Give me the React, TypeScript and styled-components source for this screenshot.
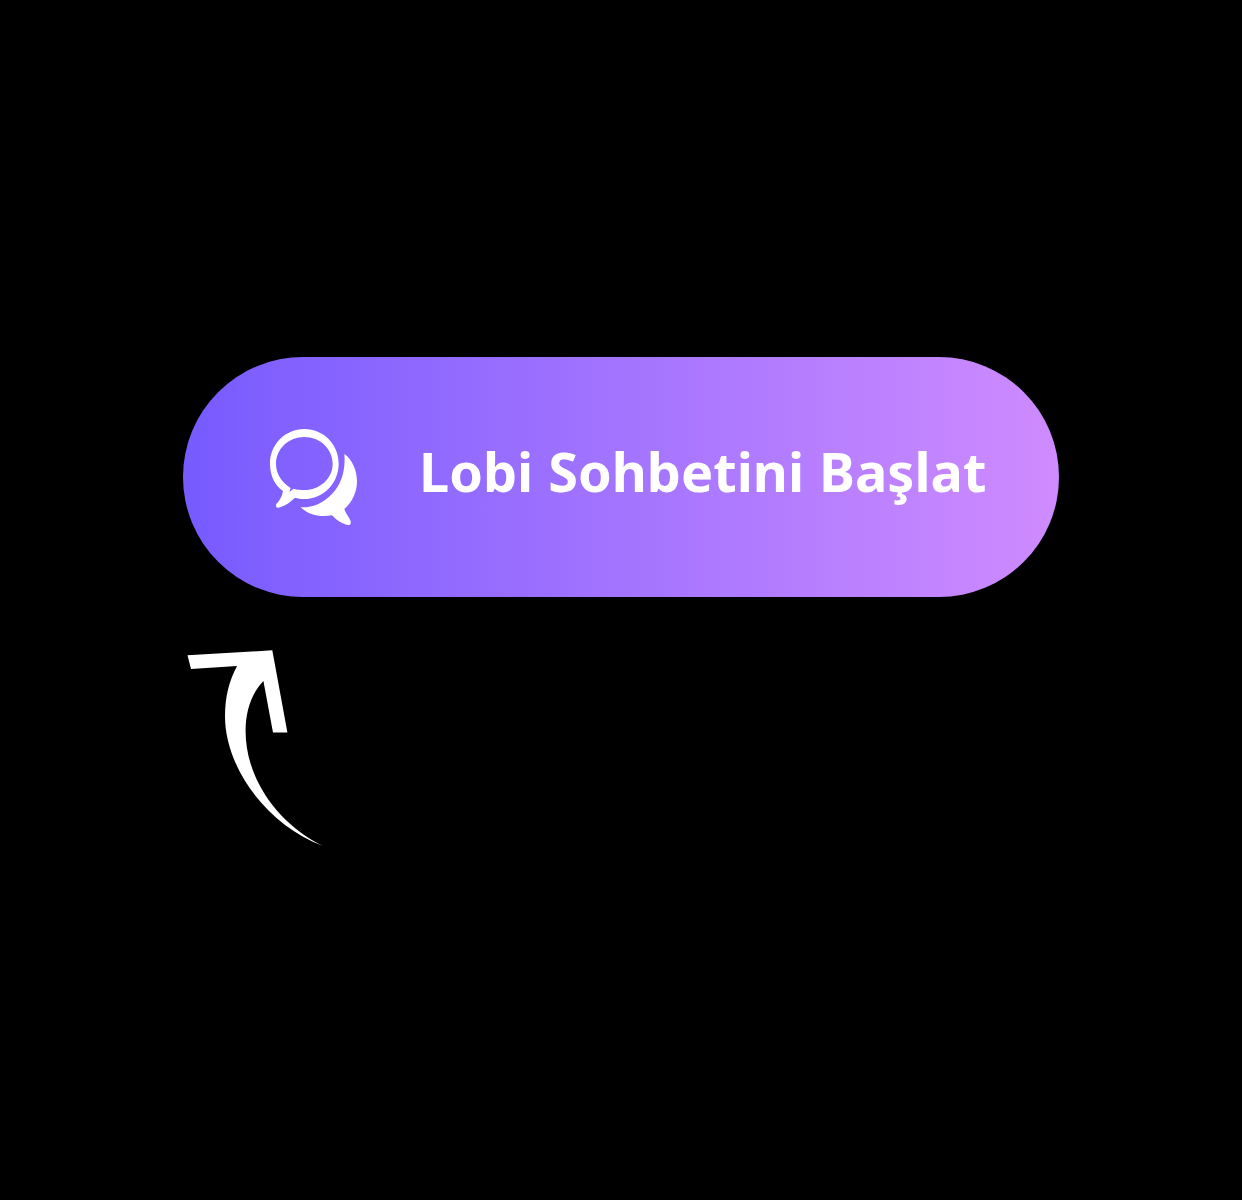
import React from "react";
import styled, { createGlobalStyle } from "styled-components";

const GlobalStyle = createGlobalStyle`
  body {
    margin: 0;
    background: #000;
  }
`;

const Page = styled.main`
  box-sizing: border-box;
  width: 1242px;
  height: 1200px;
  padding: 357px 183px 0;
  display: flex;
  flex-direction: column;
  align-items: flex-start;
  overflow: hidden;
  background: #000;
`;

const ChatButton = styled.button`
  box-sizing: border-box;
  width: 876px;
  height: 240px;
  padding: 0 0 0 77px;
  border: 0;
  border-radius: 120px;
  display: flex;
  align-items: center;
  gap: 49px;
  color: #fff;
  background: linear-gradient(90deg, #775bff 0%, #a374ff 50%, #cf8bff 100%);
  cursor: pointer;
`;

const ChatIcon = styled.svg`
  flex: none;
  width: 110px;
  height: 115px;
  fill: #fff;
`;

const Label = styled.span`
  padding-bottom: 12px;
  font-family: "Noto Sans", "Open Sans", sans-serif;
  font-size: 54px;
  font-weight: 700;
  line-height: 74px;
  word-spacing: 1px;
  white-space: nowrap;
`;

const Arrow = styled.svg`
  flex: none;
  width: 150px;
  height: 210px;
  margin-top: 43px;
  fill: #fff;
`;

export default function App() {
  return (
    <>
      <GlobalStyle />
      <Page>
        <ChatButton type="button">
          <ChatIcon viewBox="0 0 330 345" aria-hidden="true">
            <path
              fillRule="evenodd"
              d="M133 27C190 27 236 73 236 131C236 190 190 237 133 237C123 237 113 235 105 233C92 246 76 257 56 263C49 264 46 259 49 252C59 241 67 229 69 213C44 196 30 166 30 131C30 73 76 27 133 27ZM133 51C86 51 48 87 48 131C48 161 65 187 92 204L88 216L101 206C111 209 121 210 133 210C180 210 218 175 218 131C218 87 180 51 133 51Z"
            />
            <path d="M253 102C277 119 291 151 291 184C291 216 277 246 253 267C256 280 267 290 272 303C273 311 272 315 264 315C245 312 228 299 216 286C179 293 145 284 122 262C160 263 190 249 216 222C246 192 257 145 253 102Z" />
          </ChatIcon>
          <Label>Lobi Sohbetini Başlat</Label>
        </ChatButton>
        <Arrow viewBox="183 640 150 210" aria-hidden="true">
          <path d="M187.5 655.3L272.3 650.3L287.4 732.4H273L263.4 681C251 694 245.6 712 245.6 731C245.6 779 278 824 323 846C267 825 225 768 225 716C225 697 229 681 237 666L191 669Z" />
        </Arrow>
      </Page>
    </>
  );
}
